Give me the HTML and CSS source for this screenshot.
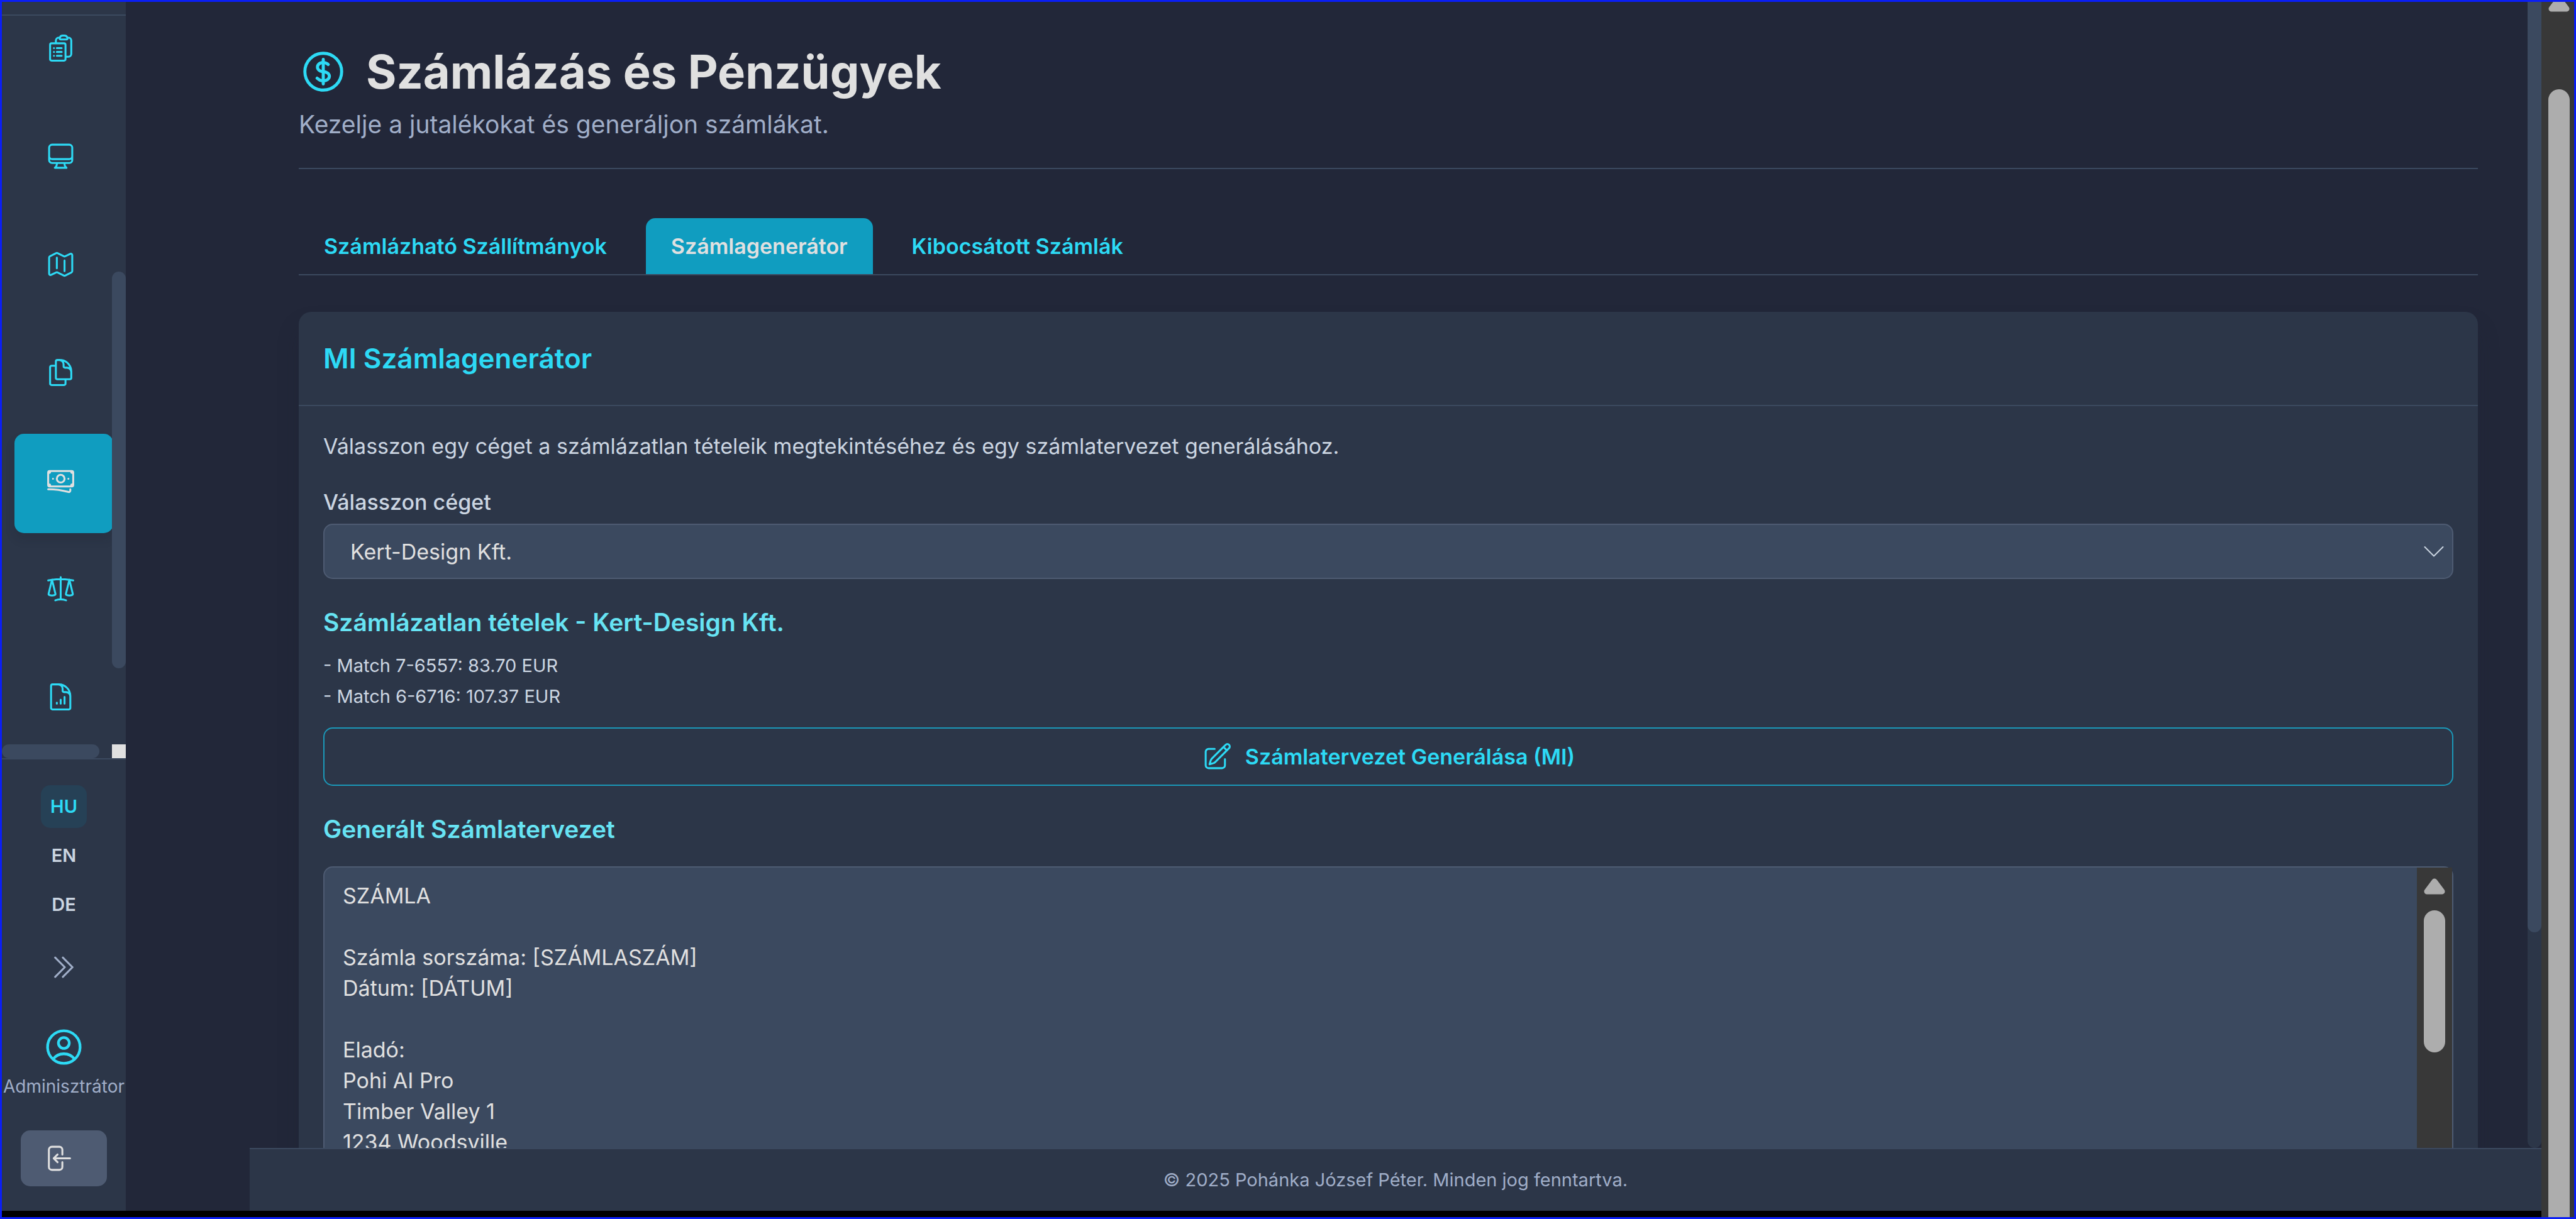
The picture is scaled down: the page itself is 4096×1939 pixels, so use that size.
FILE: index.html
```html
<!DOCTYPE html>
<html lang="hu">
<head>
<meta charset="utf-8">
<title>Számlázás és Pénzügyek</title>
<link rel="stylesheet" href="styles.css">
</head>
<body>
<div class="window">
  <div class="app">
    <aside class="sidebar">
      <div class="sidebar-top"></div>
      <div class="nav-area">
        <nav class="nav-list">
          <a class="nav-item" href="#" aria-label="Listák"><svg class="icon" viewBox="0 0 24 24"><path d="M9 12h3.75M9 15h3.75M9 18h3.75m3 .75H18a2.25 2.25 0 0 0 2.25-2.25V6.108c0-1.135-.845-2.098-1.976-2.192a48.424 48.424 0 0 0-1.123-.08m-5.801 0c-.065.21-.1.433-.1.664 0 .414.336.75.75.75h4.5a.75.75 0 0 0 .75-.75 2.25 2.25 0 0 0-.1-.664m-5.8 0A2.251 2.251 0 0 1 13.5 2.25H15c1.012 0 1.867.668 2.15 1.586m-5.8 0c-.376.023-.75.05-1.124.08C9.095 4.01 8.25 4.973 8.25 6.108V8.25m0 0H4.875c-.621 0-1.125.504-1.125 1.125v11.25c0 .621.504 1.125 1.125 1.125h9.75c.621 0 1.125-.504 1.125-1.125V9.375c0-.621-.504-1.125-1.125-1.125H8.25ZM6.75 12h.008v.008H6.75V12Zm0 3h.008v.008H6.75V15Zm0 3h.008v.008H6.75V18Z"/></svg></a>
          <a class="nav-item" href="#" aria-label="Monitor"><svg class="icon" viewBox="0 0 24 24"><path d="M9 17.25v1.007a3 3 0 0 1-.879 2.122L7.5 21h9l-.621-.621A3 3 0 0 1 15 18.257V17.25m6-12V15a2.25 2.25 0 0 1-2.25 2.25H5.25A2.25 2.25 0 0 1 3 15V5.25m18 0A2.25 2.25 0 0 0 18.75 3H5.25A2.25 2.25 0 0 0 3 5.25m18 0V12a2.25 2.25 0 0 1-2.25 2.25H5.25A2.25 2.25 0 0 1 3 12V5.25"/></svg></a>
          <a class="nav-item" href="#" aria-label="Térkép"><svg class="icon" viewBox="0 0 24 24"><path d="M9 6.75V15m6-6v8.25m.503 3.498 4.875-2.437c.381-.19.622-.58.622-1.006V4.82c0-.836-.88-1.38-1.628-1.006l-3.869 1.934c-.317.159-.69.159-1.006 0L9.503 3.252a1.125 1.125 0 0 0-1.006 0L3.622 5.689C3.24 5.88 3 6.27 3 6.695V19.18c0 .836.88 1.38 1.628 1.006l3.869-1.934c.317-.159.69-.159 1.006 0l4.994 2.497c.317.158.69.158 1.006 0Z"/></svg></a>
          <a class="nav-item" href="#" aria-label="Dokumentumok"><svg class="icon" viewBox="0 0 24 24"><path d="M15.75 17.25v3.375c0 .621-.504 1.125-1.125 1.125h-9.75a1.125 1.125 0 0 1-1.125-1.125V7.875c0-.621.504-1.125 1.125-1.125H6.75a9.06 9.06 0 0 1 1.5.124m7.5 10.376h3.375c.621 0 1.125-.504 1.125-1.125V11.25c0-4.46-3.243-8.161-7.5-8.876a9.06 9.06 0 0 0-1.5-.124H9.375c-.621 0-1.125.504-1.125 1.125v3.5m7.5 10.375H9.375a1.125 1.125 0 0 1-1.125-1.125v-9.25m12 6.625v-1.875a3.375 3.375 0 0 0-3.375-3.375h-1.5a1.125 1.125 0 0 1-1.125-1.125v-1.5a3.375 3.375 0 0 0-3.375-3.375H9.75"/></svg></a>
          <a class="nav-item nav-item-active" href="#" aria-label="Számlázás"><svg class="icon" viewBox="0 0 24 24"><path d="M2.25 18.75a60.07 60.07 0 0 1 15.797 2.101c.727.198 1.453-.342 1.453-1.096V18.75M3.75 4.5v.75A.75.75 0 0 1 3 6h-.75m0 0v-.375c0-.621.504-1.125 1.125-1.125H20.25M2.25 6v9m18-10.5v.75c0 .414.336.75.75.75h.75m-1.5-1.5h.375c.621 0 1.125.504 1.125 1.125v9.75c0 .621-.504 1.125-1.125 1.125h-.375m1.5-1.5H21a.75.75 0 0 0-.75.75v.75m0 0H3.75m0 0h-.375a1.125 1.125 0 0 1-1.125-1.125V15m1.5 1.5v-.75A.75.75 0 0 0 3 15h-.75M15 10.5a3 3 0 1 1-6 0 3 3 0 0 1 6 0Zm3 0h.008v.008H18V10.5Zm-12 0h.008v.008H6V10.5Z"/></svg></a>
          <a class="nav-item" href="#" aria-label="Viták"><svg class="icon" viewBox="0 0 24 24"><path d="M12 3v17.25m0 0c-1.472 0-2.882.265-4.185.75M12 20.25c1.472 0 2.882.265 4.185.75M18.75 4.97A48.416 48.416 0 0 0 12 4.5c-2.291 0-4.545.16-6.75.47m13.5 0c1.01.143 2.01.317 3 .52m-3-.52 2.62 10.726c.122.499-.106 1.028-.589 1.202a5.988 5.988 0 0 1-2.031.352 5.988 5.988 0 0 1-2.031-.352c-.483-.174-.711-.703-.59-1.202L18.75 4.971Zm-16.5.52c.99-.203 1.99-.377 3-.52m0 0 2.62 10.726c.122.499-.106 1.028-.589 1.202a5.989 5.989 0 0 1-2.031.352 5.989 5.989 0 0 1-2.031-.352c-.483-.174-.711-.703-.59-1.202L5.25 4.971Z"/></svg></a>
          <a class="nav-item" href="#" aria-label="Riportok"><svg class="icon" viewBox="0 0 24 24"><path d="M19.5 14.25v-2.625a3.375 3.375 0 0 0-3.375-3.375h-1.5A1.125 1.125 0 0 1 13.5 7.125v-1.5a3.375 3.375 0 0 0-3.375-3.375H8.25M9 16.5v.75m3-3v3M15 12v5.25m-4.5-15H5.625c-.621 0-1.125.504-1.125 1.125v17.25c0 .621.504 1.125 1.125 1.125h12.75c.621 0 1.125-.504 1.125-1.125V11.25a9 9 0 0 0-9-9Z"/></svg></a>
        </nav>
        <div class="nav-track-y"><div class="nav-thumb-y"></div></div>
        <div class="nav-track-x"><div class="nav-thumb-x"></div></div>
        <div class="nav-corner"></div>
      </div>
      <div class="sidebar-footer">
        <div class="languages">
          <button class="language language-active" type="button">HU</button>
          <button class="language" type="button">EN</button>
          <button class="language" type="button">DE</button>
        </div>
        <button class="expand" type="button" aria-label="Kinyitás"><svg class="icon" viewBox="0 0 24 24"><path d="m5.25 4.5 7.5 7.5-7.5 7.5m6-15 7.5 7.5-7.5 7.5"/></svg></button>
        <svg class="icon user-icon" viewBox="0 0 24 24"><path d="M17.982 18.725A7.488 7.488 0 0 0 12 15.75a7.488 7.488 0 0 0-5.982 2.975m11.963 0a9 9 0 1 0-11.963 0m11.963 0A8.966 8.966 0 0 1 12 21a8.966 8.966 0 0 1-5.982-2.275M15 9.75a3 3 0 1 1-6 0 3 3 0 0 1 6 0Z"/></svg>
        <p class="user-name">Adminisztrátor</p>
        <button class="logout" type="button" aria-label="Kijelentkezés"><svg class="icon" viewBox="0 0 24 24"><path d="M15.75 9V5.25A2.25 2.25 0 0 0 13.5 3h-6a2.25 2.25 0 0 0-2.25 2.25v13.5A2.25 2.25 0 0 0 7.5 21h6a2.25 2.25 0 0 0 2.25-2.25V15M12 9l-3 3m0 0 3 3m-3-3h12.75"/></svg></button>
      </div>
    </aside>

    <div class="main">
      <div class="scroll-area">
        <main class="content">
          <header class="page-header">
            <h1 class="page-title"><svg class="icon title-icon" viewBox="0 0 24 24"><path d="M12 6v12m-3-2.818.879.659c1.171.879 3.07.879 4.242 0 1.172-.879 1.172-2.303 0-3.182C13.536 12.219 12.768 12 12 12c-.725 0-1.45-.22-2.003-.659-1.106-.879-1.106-2.303 0-3.182s2.9-.879 4.006 0l.415.33M21 12a9 9 0 1 1-18 0 9 9 0 0 1 18 0Z"/></svg>Számlázás és Pénzügyek</h1>
            <p class="page-subtitle">Kezelje a jutalékokat és generáljon számlákat.</p>
          </header>
          <div class="tabs" role="tablist">
            <button class="tab" type="button" role="tab">Számlázható Szállítmányok</button>
            <button class="tab tab-active" type="button" role="tab" aria-selected="true">Számlagenerátor</button>
            <button class="tab" type="button" role="tab">Kibocsátott Számlák</button>
          </div>
          <section class="card">
            <h2 class="card-title">MI Számlagenerátor</h2>
            <div class="card-body">
              <p class="intro">Válasszon egy céget a számlázatlan tételeik megtekintéséhez és egy számlatervezet generálásához.</p>
              <label class="field-label" for="company">Válasszon céget</label>
              <div class="select-wrap">
                <select class="select" id="company"><option>Kert-Design Kft.</option></select>
                <svg class="select-arrow" viewBox="0 0 34 20"><path d="M2.5 3 17 17.5 31.5 3"/></svg>
              </div>
              <h3 class="subheading">Számlázatlan tételek - Kert-Design Kft.</h3>
              <ul class="items">
                <li>- Match 7-6557: 83.70 EUR</li>
                <li>- Match 6-6716: 107.37 EUR</li>
              </ul>
              <button class="generate" type="button"><svg class="icon" viewBox="0 0 24 24"><path d="m16.862 4.487 1.687-1.688a1.875 1.875 0 1 1 2.652 2.652L10.582 16.07a4.5 4.5 0 0 1-1.897 1.13L6 18l.8-2.685a4.5 4.5 0 0 1 1.13-1.897l8.932-8.931Zm0 0L19.5 7.125M18 14v4.75A2.25 2.25 0 0 1 15.75 21H5.25A2.25 2.25 0 0 1 3 18.75V8.25A2.25 2.25 0 0 1 5.25 6H10"/></svg>Számlatervezet Generálása (MI)</button>
              <h3 class="subheading" id="draft-heading">Generált Számlatervezet</h3>
              <div class="draft">
                <textarea class="draft-text" rows="15" aria-labelledby="draft-heading">SZÁMLA

Számla sorszáma: [SZÁMLASZÁM]
Dátum: [DÁTUM]

Eladó:
Pohi AI Pro
Timber Valley 1
1234 Woodsville</textarea>
                <div class="draft-scrollbar">
                  <svg class="arrow-up" viewBox="0 0 34 26"><path d="M5 21 17 5 29 21Z"/></svg>
                  <div class="draft-thumb"></div>
                </div>
              </div>
            </div>
          </section>
        </main>
        <div class="main-track"><div class="main-thumb"></div></div>
      </div>
      <footer class="footer">© 2025 Pohánka József Péter. Minden jog fenntartva.</footer>
    </div>
  </div>
  <div class="window-scrollbar">
    <svg class="arrow-up" viewBox="0 0 34 26"><path d="M5 21 17 5 29 21Z"/></svg>
    <div class="window-thumb"></div>
  </div>
</div>
</body>
</html>
```

FILE: styles.css
```css
* {
  box-sizing: border-box;
  margin: 0;
  padding: 0;
}

:root {
  --bg: #222739;
  --panel: #2c3648;
  --field: #3b495f;
  --edge: #4e5b72;
  --cyan: #2ddaf5;
  --teal: #109dc0;
  --light: #e0e0e0;
  --text: #cbd5e1;
  --muted: #a0aec8;
  --track: #383838;
  --thumb: #adadad;
}

body {
  background: #000;
  color: var(--text);
  font-family: Inter, "Liberation Sans", sans-serif;
  font-size: 34px;
  line-height: 49px;
}

button,
select,
textarea {
  font: inherit;
  color: inherit;
  background: none;
  border: 0;
}

.window {
  display: grid;
  grid-template-columns: minmax(0, 1fr) 52px;
  height: 100vh;
  border: 3px solid #0a1ef5;
  overflow: hidden;
}

.app {
  display: grid;
  grid-template-columns: 197px minmax(0, 1fr);
  min-height: 0;
  padding-bottom: 10px;
}

.icon {
  display: block;
  flex: none;
  width: 49px;
  height: 49px;
  fill: none;
  stroke: currentColor;
  stroke-width: 1.5;
  stroke-linecap: round;
  stroke-linejoin: round;
}

/* Sidebar */

.sidebar {
  display: flex;
  flex-direction: column;
  min-height: 0;
  background: var(--panel);
}

.sidebar-top {
  flex: none;
  height: 22px;
  border-bottom: 2px solid var(--field);
}

.nav-area {
  flex: 1;
  display: grid;
  grid-template: minmax(0, 1fr) 22px / minmax(0, 1fr) 22px;
  min-height: 0;
}

.nav-list {
  display: flex;
  flex-direction: column;
  gap: 14px;
  margin-top: -23px;
  padding-left: 20px;
  overflow: hidden;
  clip-path: inset(23px 0 0 0);
}

.nav-item {
  flex: none;
  width: 157px;
  height: 158px;
  padding: 50px 49px;
  border-radius: 15px;
  color: var(--cyan);
}

.nav-item-active {
  background: var(--teal);
  color: var(--light);
  box-shadow: 0 10px 15px rgba(20, 24, 40, 0.15);
}

.nav-track-y {
  padding-top: 407px;
}

.nav-thumb-y {
  height: 631px;
  border-radius: 11px;
  background: var(--field);
}

.nav-thumb-x {
  width: 155px;
  height: 22px;
  border-radius: 11px;
  background: var(--field);
}

.nav-corner {
  background: var(--light);
}

.sidebar-footer {
  flex: none;
  display: flex;
  flex-direction: column;
  align-items: center;
  padding: 41px 0 39px;
  border-top: 2px solid var(--field);
}

.languages {
  display: flex;
  flex-direction: column;
  gap: 10px;
}

.language {
  padding: 0 15px;
  border-radius: 15px;
  font-size: 29px;
  font-weight: 600;
  line-height: 68px;
}

.language-active {
  background: #264156;
  color: var(--cyan);
}

.expand {
  margin-top: 41px;
  color: var(--muted);
}

.user-icon {
  width: 69px;
  height: 69px;
  margin-top: 68px;
  color: var(--cyan);
}

.user-name {
  margin-top: 9px;
  color: var(--muted);
  font-size: 28px;
  line-height: 39px;
}

.logout {
  width: 137px;
  margin-top: 50px;
  padding: 20px 34px;
  border-radius: 15px;
  background: var(--edge);
  color: var(--light);
}

/* Main column */

.main {
  display: flex;
  flex-direction: column;
  min-height: 0;
  background: var(--bg);
}

.scroll-area {
  flex: 1;
  display: grid;
  grid-template-columns: minmax(0, 1fr) 22px;
  min-height: 0;
  overflow: hidden;
}

.content {
  min-height: 0;
  padding: 67px 79px 0 275px;
}

.main-track {
  height: 100%;
  border-radius: 11px;
  background: var(--panel);
}

.main-thumb {
  height: 1480px;
  border-radius: 0 0 11px 11px;
  background: var(--field);
}

.page-header {
  padding-bottom: 40px;
  border-bottom: 2px solid var(--field);
}

.page-title {
  display: flex;
  align-items: center;
  gap: 29px;
  color: var(--light);
  font-size: 74px;
  font-weight: 700;
  line-height: 88px;
}

.title-icon {
  width: 78px;
  height: 78px;
  color: var(--cyan);
}

.page-subtitle {
  margin-top: 10px;
  color: var(--muted);
  font-size: 39px;
  line-height: 59px;
}

.tabs {
  display: flex;
  gap: 22px;
  margin-top: 78px;
  border-bottom: 2px solid var(--field);
}

.tab {
  padding: 20px 40px;
  border-radius: 15px 15px 0 0;
  color: var(--cyan);
  font-weight: 600;
}

.tab-active {
  background: var(--teal);
  color: var(--light);
}

.card {
  margin-top: 58px;
  border-radius: 20px;
  background: var(--panel);
  box-shadow: 0 24px 36px rgba(30, 35, 50, 0.2);
}

.card-title {
  padding: 39px;
  border-bottom: 2px solid var(--field);
  color: var(--cyan);
  font-size: 44px;
  font-weight: 600;
  line-height: 70px;
}

.card-body {
  padding: 39px;
}

.field-label {
  display: block;
  margin-top: 40px;
  font-weight: 500;
}

.select-wrap {
  position: relative;
  margin-top: 10px;
}

.select {
  appearance: none;
  display: block;
  width: 100%;
  height: 88px;
  padding: 0 41px;
  border: 2px solid var(--edge);
  border-radius: 15px;
  background: var(--field);
  color: var(--light);
}

.select-arrow {
  position: absolute;
  top: 34px;
  right: 14px;
  width: 34px;
  height: 20px;
  fill: none;
  stroke: var(--text);
  stroke-width: 2;
  stroke-linecap: round;
  stroke-linejoin: round;
}

.subheading {
  margin-top: 39px;
  color: #67e3f3;
  font-size: 39px;
  font-weight: 600;
  line-height: 59px;
}

.items {
  margin-top: 15px;
  list-style: none;
  font-size: 29px;
}

.generate {
  display: flex;
  align-items: center;
  justify-content: center;
  gap: 20px;
  width: 100%;
  height: 93px;
  margin-top: 25px;
  border: 2px solid #1b98b8;
  border-radius: 15px;
  color: var(--cyan);
  font-weight: 600;
}

.draft {
  display: flex;
  margin-top: 30px;
  border: 2px solid var(--edge);
  border-radius: 15px;
  background: var(--field);
}

.draft-text {
  flex: 1;
  padding: 20px 29px;
  color: var(--light);
  resize: none;
  overflow: hidden;
  outline: 0;
}

.draft-scrollbar {
  flex: none;
  width: 56px;
  padding: 17px 11px;
  background: var(--track);
}

.arrow-up {
  display: block;
  width: 34px;
  height: 26px;
  fill: var(--thumb);
  stroke: var(--thumb);
  stroke-width: 9;
  stroke-linejoin: round;
}

.draft-thumb {
  height: 226px;
  margin-top: 25px;
  border-radius: 17px;
  background: var(--thumb);
}

.footer {
  flex: none;
  margin-left: 197px;
  padding: 25px;
  border-top: 2px solid var(--field);
  background: var(--panel);
  color: var(--muted);
  font-size: 29px;
  line-height: 48px;
  text-align: center;
}

/* Window scrollbar */

.window-scrollbar {
  display: flex;
  flex-direction: column;
  min-height: 0;
  padding: 0 7px 0 11px;
  background: var(--track);
}

.window-scrollbar .arrow-up {
  flex: none;
  margin-top: -10px;
}

.window-thumb {
  flex: 1;
  margin-top: 123px;
  border-radius: 17px 17px 0 0;
  background: var(--thumb);
}
```
